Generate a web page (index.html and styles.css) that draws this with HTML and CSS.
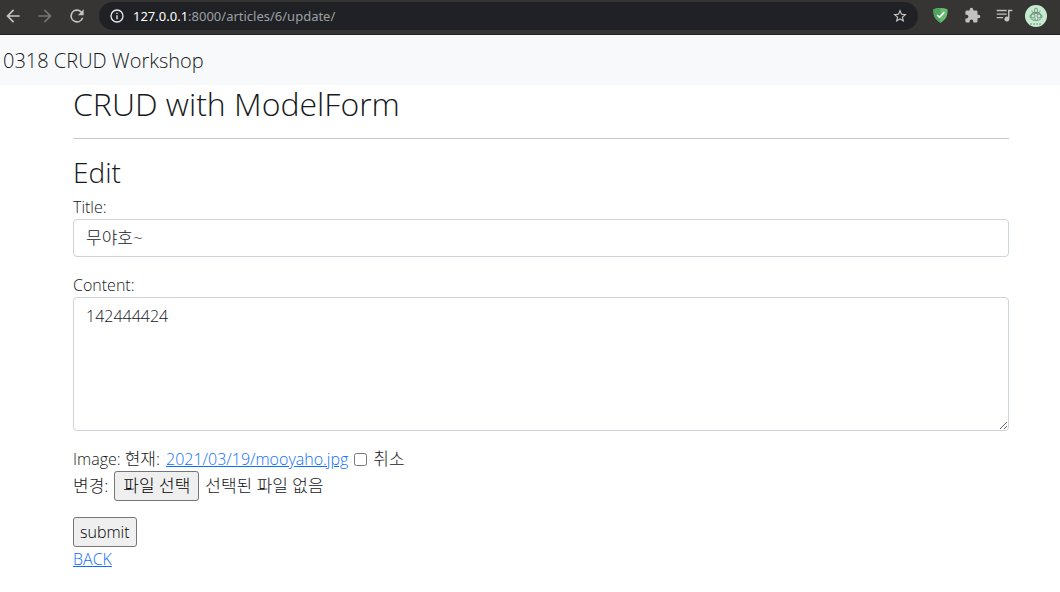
FILE: index.html
```html
<!DOCTYPE html>
<html lang="ko">
<head>
<meta charset="utf-8">
<meta name="viewport" content="width=device-width, initial-scale=1">
<title>0318 CRUD Workshop</title>
<link rel="stylesheet" href="styles.css">
</head>
<body>
<div class="toolbar">
  <button class="tool" type="button" aria-label="Back"><svg viewBox="0 0 24 24"><path d="M20 11H7.800l5.600-5.600L12 4l-8 8 8 8 1.400-1.400L7.800 13H20z"/></svg></button>
  <button class="tool tool-dim" type="button" aria-label="Forward"><svg viewBox="0 0 24 24"><path d="M12 4l-1.400 1.400 5.600 5.600H4v2h12.200l-5.600 5.600L12 20l8-8z"/></svg></button>
  <button class="tool" type="button" aria-label="Reload"><svg viewBox="0 0 24 24"><path d="M17.650 6.350A8 8 0 1 0 19.730 14h-2.080A6 6 0 1 1 12 6c1.660 0 3.140.690 4.220 1.780L13 11h7V4z"/></svg></button>
  <div class="address">
    <svg class="info" viewBox="0 0 24 24"><path d="M11 17h2v-6h-2zm1-15a10 10 0 1 0 0 20 10 10 0 0 0 0-20zm0 18a8 8 0 1 1 0-16 8 8 0 0 1 0 16zM11 9h2V7h-2z"/></svg>
    <span class="url"><span class="host">127.0.0.1</span>:8000/articles/6/update/</span>
    <button class="star" type="button" aria-label="Bookmark"><svg viewBox="0 0 24 24"><path d="M22 9.240l-7.190-.620L12 2 9.190 8.630 2 9.240l5.460 4.730L5.820 21 12 17.270 18.180 21l-1.630-7.030zM12 15.400l-3.760 2.270 1-4.280-3.320-2.880 4.380-.380L12 6.100l1.710 4.040 4.380.380-3.320 2.880 1 4.280z"/></svg></button>
  </div>
  <div class="extensions">
    <button class="tool" type="button" aria-label="Ad blocker"><svg viewBox="0 0 16 18"><path fill="#68bc71" d="M8 1c2.500 0 5 .500 7.500 1.500 0 6-.500 10-7.500 14.500C1 12.500.500 8.500.500 2.500 3 1.500 5.500 1 8 1z"/><path fill="#4fa55b" d="M8 1v16C1 12.500.500 8.500.500 2.500 3 1.500 5.500 1 8 1z"/><path fill="none" stroke="#fff" stroke-width="1.700" d="M4.500 8.500L7 11l5-5.500"/></svg></button>
    <button class="tool" type="button" aria-label="Extensions"><svg viewBox="0 0 24 24"><path d="M20.500 11H19V7a2 2 0 0 0-2-2h-4V3.500a2.500 2.500 0 0 0-5 0V5H4a2 2 0 0 0-2 2v3.800h1.500a2.700 2.700 0 0 1 0 5.400H2V20a2 2 0 0 0 2 2h3.800v-1.500a2.700 2.700 0 0 1 5.400 0V22H17a2 2 0 0 0 2-2v-4h1.500a2.500 2.500 0 0 0 0-5z"/></svg></button>
    <button class="tool" type="button" aria-label="Media"><svg viewBox="0 0 24 24"><path d="M1 4h14v2H1zm0 5h14v2H1zm0 5h9v2H1zM17 4h6v2h-4v11a3.500 3.500 0 1 1-2-3.200z"/></svg></button>
    <button class="tool avatar" type="button" aria-label="Profile"><svg viewBox="0 0 22 22"><circle cx="11" cy="11" r="11" fill="#c5ecd0"/><g fill="none" stroke="#637b6c" stroke-width=".8"><ellipse cx="11" cy="5.500" rx="1.500" ry="2.500"/><path d="M7 5.500c0 2 1.500 3 4 3s4-1 4-3"/><ellipse cx="11" cy="11.500" rx="6" ry="4"/><circle cx="8" cy="11" r="2"/><circle cx="14" cy="11" r="2"/><path d="M9 14h4M5 19h12" stroke-dasharray="2 1"/></g></svg></button>
  </div>
</div>
<nav class="navbar"><span class="brand">0318 CRUD Workshop</span></nav>
<main class="container">
  <h1 class="title">CRUD with ModelForm</h1>
  <hr class="rule">
  <h2 class="subtitle">Edit</h2>
  <form>
    <div class="field">
      <label for="title">Title:</label>
      <input class="control korean" id="title" type="text" value="무야호~">
    </div>
    <div class="field">
      <label for="content">Content:</label>
      <textarea class="control area" id="content">142444424</textarea>
    </div>
    <div class="field">
      <div class="row"><span>Image: <span class="korean">현재:</span></span><a class="link" href="#">2021/03/19/mooyaho.jpg</a><input class="check" type="checkbox" id="clear"><label class="korean" for="clear">취소</label></div>
      <div class="row"><span class="korean">변경:</span><input class="file" type="file" id="image"><label class="button picker korean" for="image">파일 선택</label><span class="korean">선택된 파일 없음</span></div>
    </div>
    <button class="button" type="submit">submit</button>
  </form>
  <a class="link" href="#">BACK</a>
</main>
</body>
</html>
```
FILE: styles.css
```css
* { box-sizing: border-box; }
body {
  margin: 0;
  background: #fff;
  color: #16191c;
  font: 300 16px/24px "Open Sans", "Noto Sans CJK KR", sans-serif;
}
button, input, textarea { font: inherit; color: inherit; }
.toolbar {
  display: flex;
  align-items: center;
  height: 35px;
  padding: 0 8px 3px 3px;
  background: #373533;
  border-bottom: 1px solid #242220;
}
.tool, .star {
  display: flex;
  flex: none;
  padding: 0;
  border: 0;
  background: none;
}
.tool svg { width: 20px; height: 20px; fill: #c4c2c0; }
.toolbar > .tool { margin-right: 12px; }
.toolbar > .tool-dim svg { fill: #777573; }
.address {
  display: flex;
  flex: 1;
  align-items: center;
  height: 28px;
  padding: 0 10px;
  border-radius: 14px;
  background: #202124;
}
.info { width: 16px; height: 16px; fill: #e8eaed; }
.url {
  flex: 1;
  padding-left: 8px;
  color: #9aa0a6;
  font: 400 13px/20px "Noto Sans", sans-serif;
}
.host { color: #fff; }
.star svg { width: 16px; height: 16px; fill: #d0d0d0; }
.extensions { display: flex; align-items: center; padding-left: 6px; }
.extensions .tool { width: 32px; justify-content: center; }
.extensions svg { width: 17px; height: 17px; }
.extensions .avatar svg { width: 22px; height: 22px; }
.navbar {
  padding: 11px 3px 9px;
  background: #f8f9fa;
  font-size: 20px;
  line-height: 30px;
}
.container { padding: 0 51px 16px 73px; }
.title { margin: 0; font-size: 32px; font-weight: 300; line-height: 38px; }
.rule { margin: 15px 0 16px; border: 0; border-top: 1px solid #c8c9ca; }
.subtitle { margin: 0 0 6px; font-size: 28px; font-weight: 300; line-height: 34px; }
.field { margin-bottom: 16px; }
.field > label { display: block; }
.control {
  display: block;
  width: 100%;
  height: 38px;
  padding: 6px 12px;
  border: 1px solid #ced4da;
  border-radius: 4px;
  background: #fff;
}
.area { height: 134px; resize: vertical; }
.korean { font-size: 17px; }
.control.korean { padding: 4px 12px 8px; }
.row { display: flex; align-items: center; gap: 6px; line-height: 24px; }
.row > span > .korean { line-height: 20px; }
.link { color: #0d6efd; text-decoration: underline; }
.check { width: 13px; height: 13px; margin: 0; }
.file { position: absolute; width: 1px; height: 1px; opacity: 0; }
.button {
  display: inline-block;
  height: 30px;
  padding: 2px 6px;
  border: 1px solid #767676;
  border-radius: 3px;
  background: #efefef;
  color: #000;
}
.picker { padding: 2px 8px; }
form > .button { display: block; }
```
